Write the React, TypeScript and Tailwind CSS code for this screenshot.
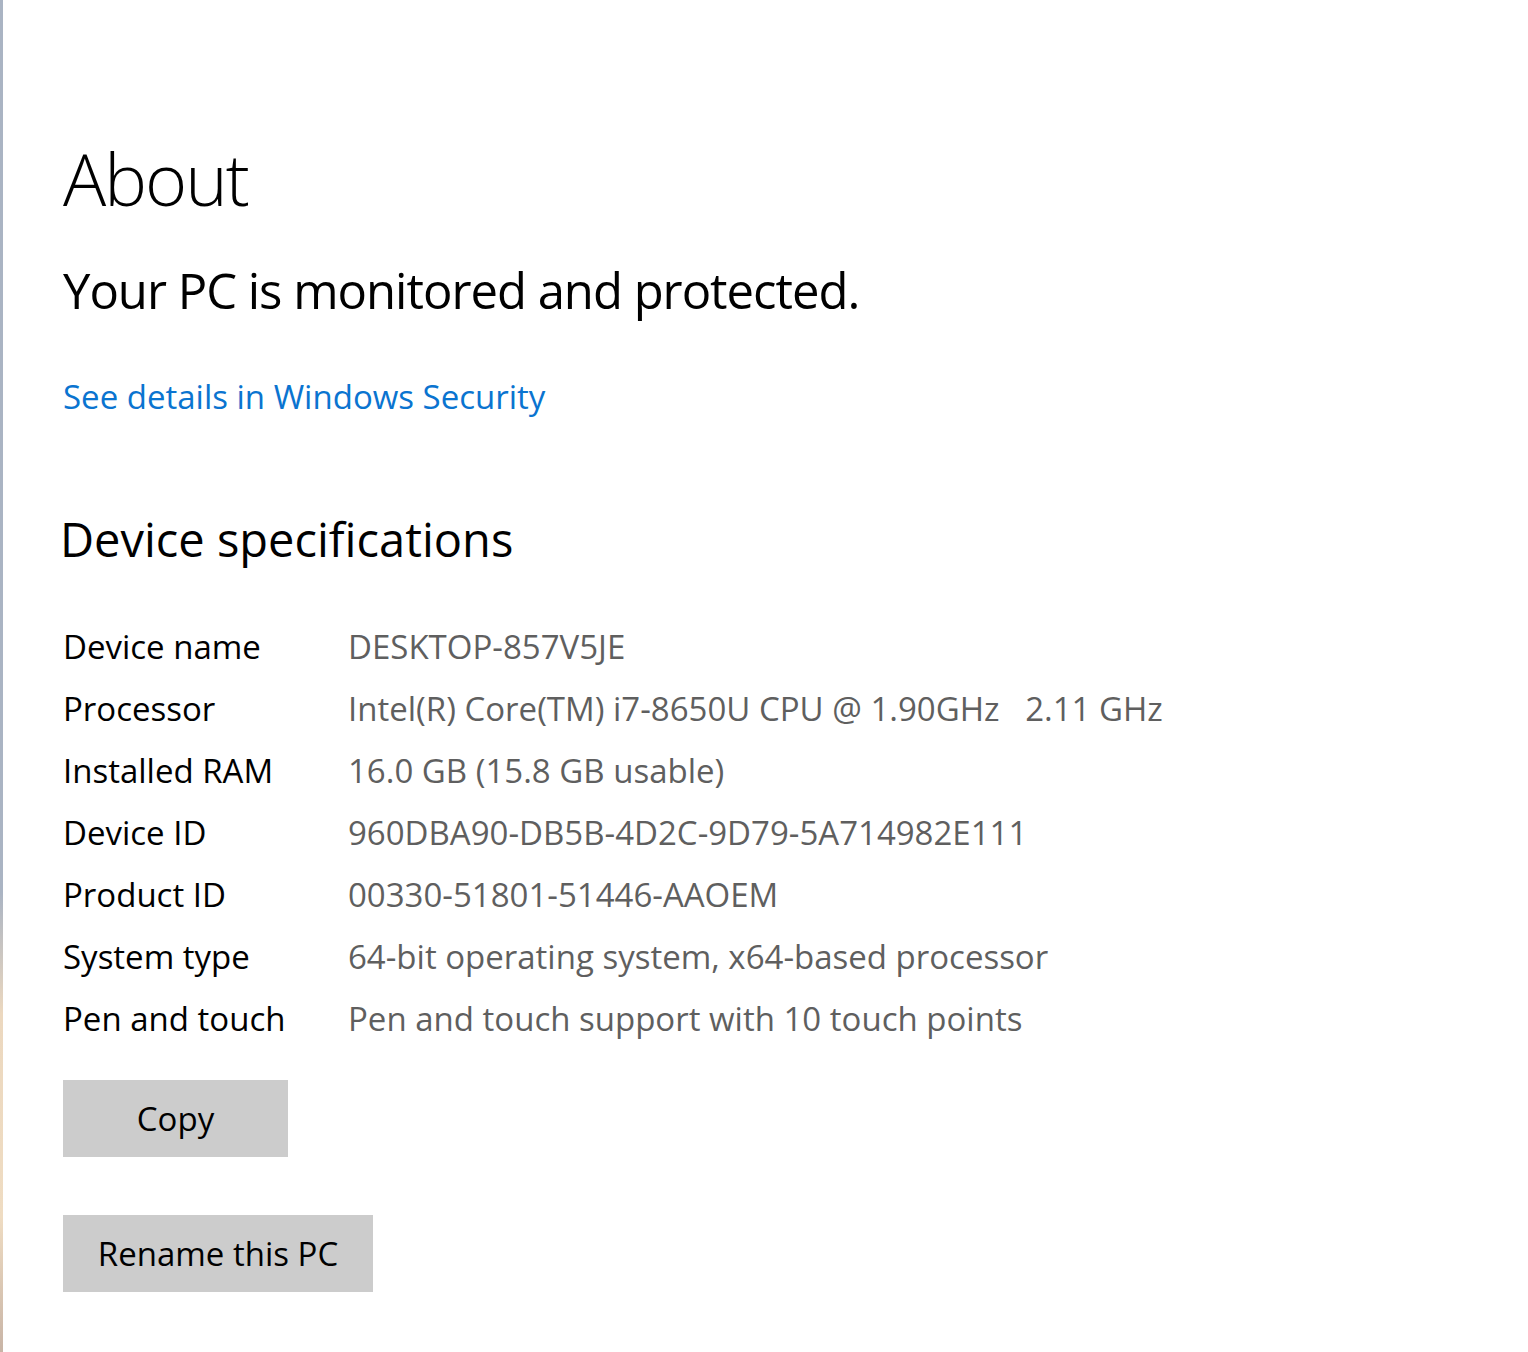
import React from "react";

const rows: [string, string][] = [
  ["Device name", "DESKTOP-857V5JE"],
  ["Processor", "Intel(R) Core(TM) i7-8650U CPU @ 1.90GHz   2.11 GHz"],
  ["Installed RAM", "16.0 GB (15.8 GB usable)"],
  ["Device ID", "960DBA90-DB5B-4D2C-9D79-5A714982E111"],
  ["Product ID", "00330-51801-51446-AAOEM"],
  ["System type", "64-bit operating system, x64-based processor"],
  ["Pen and touch", "Pen and touch support with 10 touch points"],
];

export default function App() {
  return (
    <div
      className="flex h-[1352px] w-full bg-white overflow-hidden"
      style={{ fontFamily: '"Open Sans", "Noto Sans", sans-serif' }}
    >
      <div className="w-[3px] shrink-0 bg-[linear-gradient(to_bottom,#aab4c3_0%,#aab4c3_66%,#ecd8bf_75%,#efdcc2_90%,#c8b4a6_100%)]" />
      <div className="flex flex-col pl-[60px] pt-[128px]">
        <h1 className="h-[100px] flex items-center text-[72px] font-light leading-none tracking-[-2px] text-black">
          About
        </h1>
        <div className="mt-[32px] h-[60px] flex items-center text-[49px] leading-none tracking-[-1px] text-black">
          Your PC is monitored and protected.
        </div>
        <a className="mt-[54px] h-[44px] flex items-center text-[33px] leading-none text-[#0a74d0] cursor-pointer">
          See details in Windows Security
        </a>
        <h2 className="mt-[91px] -ml-[3px] h-[60px] flex items-center text-[47px] leading-none text-black">
          Device specifications
        </h2>
        <div className="mt-[46px] flex flex-col">
          {rows.map(([k, v]) => (
            <div key={k} className="flex h-[62px] items-center text-[33px] leading-none">
              <div className="w-[285px] shrink-0 text-black">{k}</div>
              <div className="whitespace-pre text-[#5f5f5f]">{v}</div>
            </div>
          ))}
        </div>
        <button className="mt-[31px] h-[77px] w-[225px] bg-[#cccccc] text-[33px] text-black leading-none flex items-center justify-center">
          Copy
        </button>
        <button className="mt-[58px] h-[77px] w-[310px] bg-[#cccccc] text-[33px] text-black leading-none flex items-center justify-center">
          Rename this PC
        </button>
      </div>
    </div>
  );
}
